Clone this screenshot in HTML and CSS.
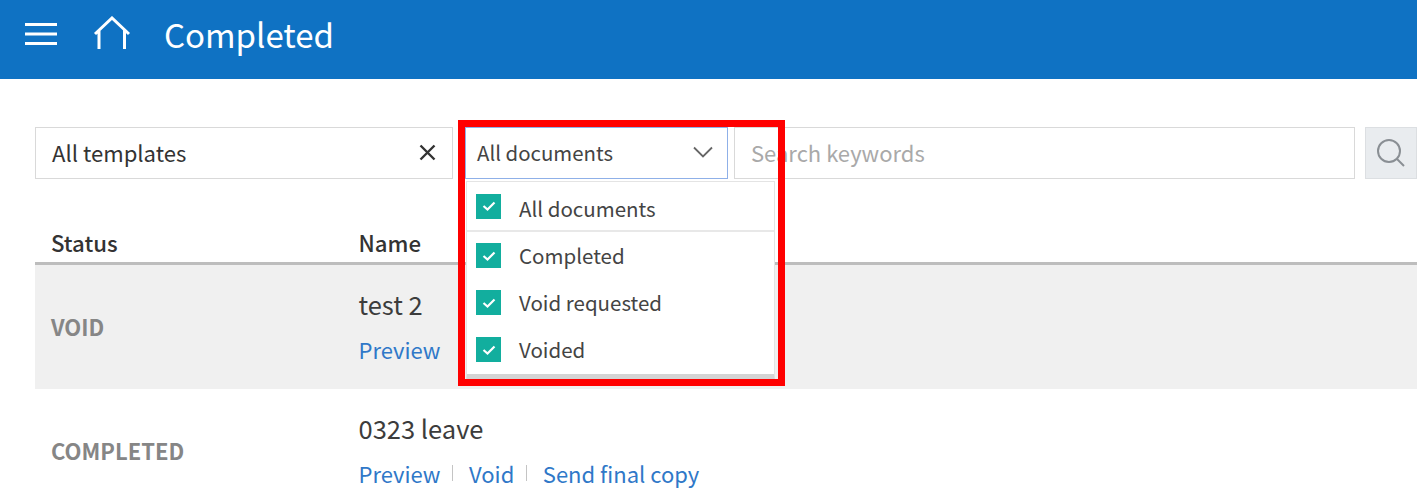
FILE: index.html
```html
<!DOCTYPE html>
<html lang="en">
<head>
  <meta charset="UTF-8">
  <meta name="viewport" content="width=device-width, initial-scale=1.0">
  <title>Completed</title>
  <link rel="stylesheet" href="styles.css">
</head>
<body>
  <header class="topbar">
    <svg class="menu-icon" width="32" height="24" viewBox="0 0 32 24" fill="none" stroke="#fff" stroke-width="3">
      <path d="M0 2.5H32M0 12H32M0 21.500H32"/>
    </svg>
    <svg class="home-icon" width="38" height="34" viewBox="0 0 38 34" fill="none" stroke="#fff" stroke-width="3">
      <path d="M2 18L19 2L36 18M6 14V33M31.500 14V33"/>
    </svg>
    <h1>Completed</h1>
  </header>

  <main class="content">
    <div class="filters">
      <div class="field template-field">
        <span>All templates</span>
        <svg width="17" height="17" viewBox="0 0 17 17" fill="none" stroke="#333" stroke-width="2.400">
          <path d="M1.500 1.500L15.500 15.500M15.500 1.500L1.500 15.500"/>
        </svg>
      </div>
      <div class="doc-select">
        <div class="field doc-field">
          <span>All documents</span>
          <svg width="20" height="12" viewBox="0 0 20 12" fill="none" stroke="#666" stroke-width="1.800">
            <path d="M1 1.500L10 10.500L19 1.500"/>
          </svg>
        </div>
        <ul class="dropdown">
          <li class="all-item"><span class="check"><svg width="14" height="12" viewBox="0 0 14 12" fill="none" stroke="#fff" stroke-width="2.200"><path d="M1.500 6L5.500 9.500L12.500 2.500"/></svg></span>All documents</li>
          <li><span class="check"><svg width="14" height="12" viewBox="0 0 14 12" fill="none" stroke="#fff" stroke-width="2.200"><path d="M1.500 6L5.500 9.500L12.500 2.500"/></svg></span>Completed</li>
          <li><span class="check"><svg width="14" height="12" viewBox="0 0 14 12" fill="none" stroke="#fff" stroke-width="2.200"><path d="M1.500 6L5.500 9.500L12.500 2.500"/></svg></span>Void requested</li>
          <li><span class="check"><svg width="14" height="12" viewBox="0 0 14 12" fill="none" stroke="#fff" stroke-width="2.200"><path d="M1.500 6L5.500 9.500L12.500 2.500"/></svg></span>Voided</li>
        </ul>
        <div class="highlight"></div>
      </div>
      <div class="field search-field">Search keywords</div>
      <button class="search-btn">
        <svg width="30" height="30" viewBox="0 0 30 30" fill="none" stroke="#8a8f94" stroke-width="2">
          <circle cx="13" cy="13" r="11"/>
          <path d="M21 21L28 28"/>
        </svg>
      </button>
    </div>

    <div class="row head-row">
      <div class="status-col">Status</div>
      <div>Name</div>
    </div>
    <div class="row doc-row voided">
      <div class="status-col status">VOID</div>
      <div class="doc-info">
        <div class="doc-name">test 2</div>
        <div class="links"><a>Preview</a></div>
      </div>
    </div>
    <div class="row doc-row">
      <div class="status-col status">COMPLETED</div>
      <div class="doc-info">
        <div class="doc-name">0323 leave</div>
        <div class="links"><a>Preview</a><a>Void</a><a>Send final copy</a></div>
      </div>
    </div>
  </main>
</body>
</html>
```

FILE: styles.css
```css
* {
  box-sizing: border-box;
}

html, body {
  height: 100%;
}

body {
  margin: 0;
  overflow: hidden;
  background-color: #fff;
  color: #333;
  font-family: "Noto Sans CJK KR", "Noto Sans", sans-serif;
}

.topbar {
  display: flex;
  align-items: center;
  height: 79px;
  padding-left: 25px;
  background-color: #0f72c3;
}

.menu-icon {
  margin-right: 36px;
  margin-top: -11px;
}

.home-icon {
  margin-right: 33px;
  margin-top: -14px;
}

.topbar h1 {
  margin: -10px 0 0;
  color: #fff;
  font-size: 33px;
  font-weight: 400;
  line-height: 1;
}

.content {
  padding: 48px 0 0 35px;
}

.filters {
  display: flex;
  height: 52px;
}

.field {
  display: flex;
  align-items: center;
  justify-content: space-between;
  height: 52px;
  padding-bottom: 2px;
  border: 1px solid #d9d9d9;
  background-color: #fff;
  font-size: 22px;
}

.template-field {
  width: 418px;
  padding-left: 16px;
  padding-right: 16px;
  margin-right: 12px;
  font-size: 22.100px;
}

.doc-select {
  position: relative;
  width: 263px;
  margin-right: 6px;
}

.doc-field {
  width: 263px;
  padding-left: 11px;
  padding-right: 14px;
  border-color: #8fb0e8;
  color: #444;
  font-size: 20.400px;
}

.dropdown {
  position: absolute;
  z-index: 2;
  top: 54px;
  left: 1px;
  width: 309px;
  height: 201px;
  margin: 0;
  padding: 0;
  list-style: none;
  background-color: #fff;
  border: 1px solid #e4e4e4;
  border-bottom: 8px solid #d4d4d4;
  font-size: 20.500px;
  color: #444;
}

.dropdown li {
  display: flex;
  align-items: center;
  height: 47px;
  padding-left: 9px;
  padding-bottom: 2px;
}

.dropdown li .check {
  margin-bottom: -2px;
}

.dropdown .all-item {
  height: 50px;
  padding-top: 4px;
  padding-bottom: 0;
  border-bottom: 2px solid #e8e8e8;
}

.dropdown .all-item .check {
  margin-top: -4px;
  margin-bottom: 0;
}

.check {
  display: flex;
  align-items: center;
  justify-content: center;
  width: 25px;
  height: 25px;
  margin-right: 18px;
  background-color: #12ae9e;
}

.highlight {
  position: absolute;
  z-index: 3;
  top: -7px;
  left: -7px;
  width: 327px;
  height: 266px;
  border: 7px solid #f00;
  pointer-events: none;
}

.search-field {
  width: 621px;
  padding-left: 16px;
  margin-right: 10px;
  color: #a9a9a9;
}

.search-btn {
  display: flex;
  align-items: center;
  justify-content: center;
  width: 52px;
  height: 52px;
  padding: 0;
  border: 1px solid #dcdfe2;
  background-color: #e9ecef;
}

.row {
  display: flex;
  align-items: center;
}

.status-col {
  width: 323.500px;
  padding-left: 16px;
}

.head-row {
  height: 42px;
  padding-bottom: 2px;
  margin-top: 44px;
  border-bottom: 3px solid #bdbdbd;
  font-size: 22.200px;
  font-weight: 500;
}

.doc-row {
  height: 124px;
}

.voided {
  background-color: #f0f0f0;
}

.status {
  padding-bottom: 2px;
  color: #868686;
  font-size: 22px;
  font-weight: 700;
}

.doc-info {
  padding-bottom: 4px;
}

.doc-name {
  font-size: 25.500px;
  line-height: 36px;
  color: #3c3c3c;
}

.links {
  display: flex;
  margin-top: 11px;
  font-size: 22px;
  line-height: 32px;
  color: #2f78c8;
}

.links a + a {
  margin-left: 12px;
  padding-left: 16.500px;
  background: linear-gradient(#c4c4c4, #c4c4c4) left center / 1px 16px no-repeat;
}
```
